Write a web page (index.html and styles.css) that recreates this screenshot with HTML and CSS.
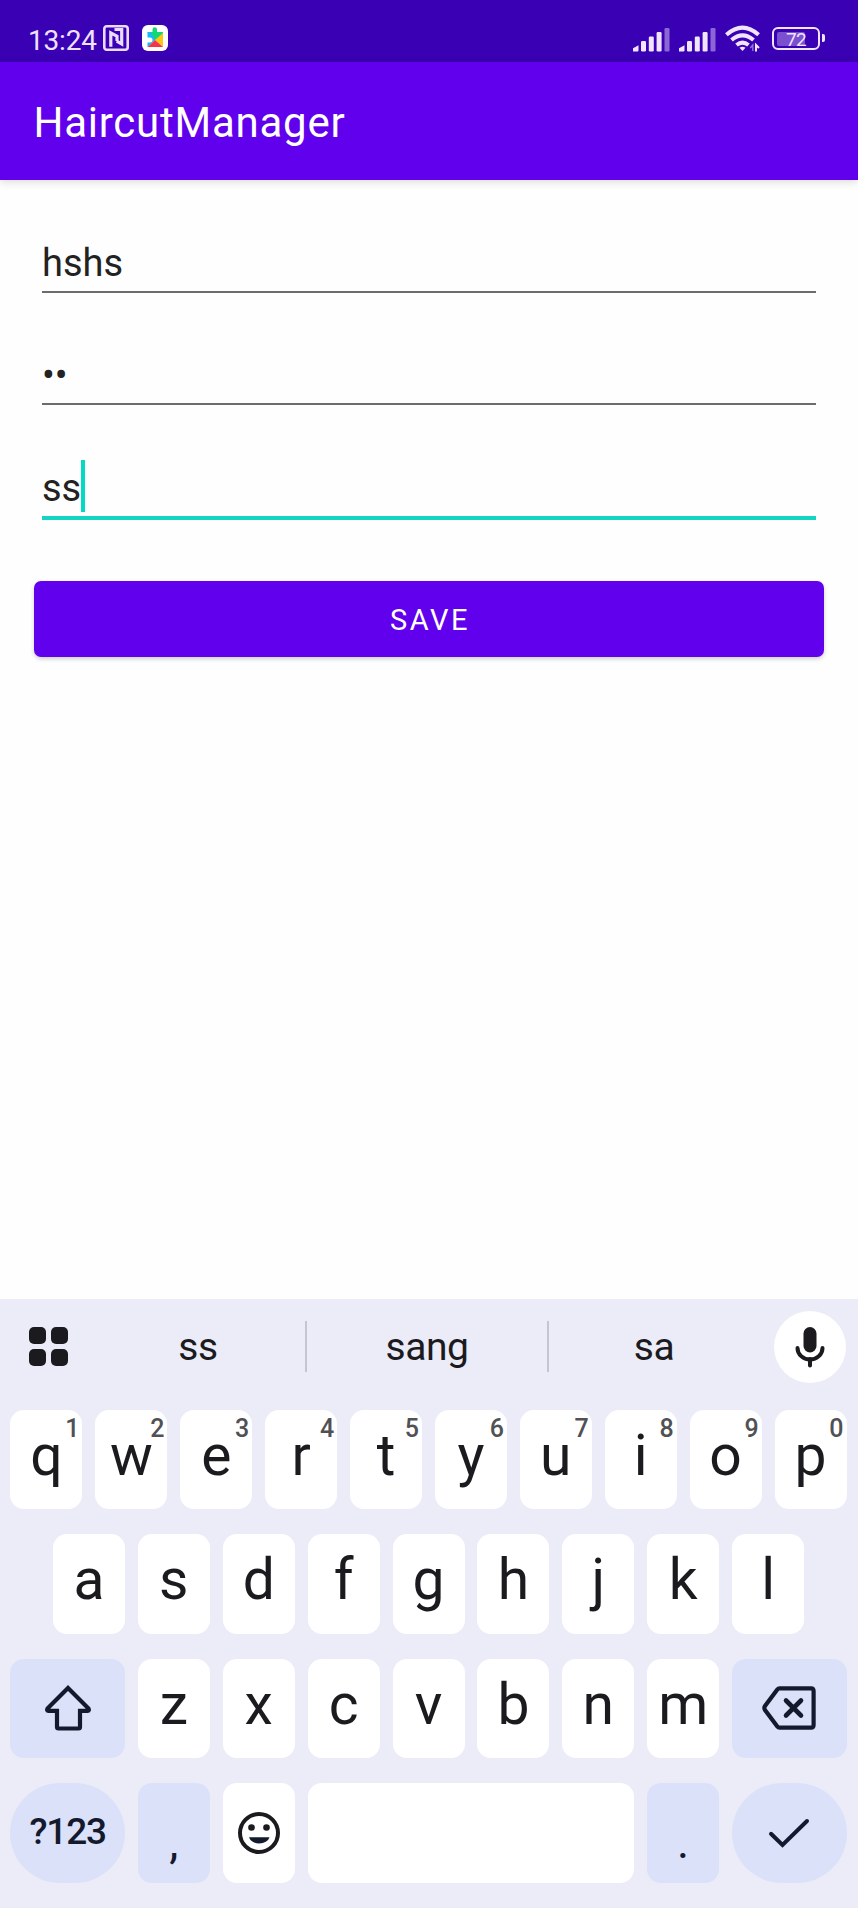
FILE: index.html
```html
<!DOCTYPE html>
<html lang="en">
<head>
<meta charset="utf-8">
<title>HaircutManager</title>
<link rel="stylesheet" href="styles.css">
</head>
<body>
<div class="screen">
  <header class="status">
    <span class="clock">13:24</span>
    <svg class="nfc" width="26" height="26" viewBox="0 0 26 26" fill="none" stroke="#eadcff"><rect x="1.300" y="1.300" width="23.400" height="23.400" rx="2.500" stroke-width="2.600"/><path d="M7.800 21.800V8l6.200 3.200V16M11.500 4.500h7.200V19l-5-2.800" stroke-width="3.200"/></svg>
    <svg class="play" width="26" height="26" viewBox="0 0 26 26"><rect width="26" height="26" rx="6" fill="#fff"/><path d="M5.500 7h5V4.500a2 2 0 0 1 4.500 0V7h6v3l-8 5.500z" fill="#13d775"/><path d="M5.500 7H9l4 8-7.500 7v-4.500h2.500a2.200 2.200 0 0 0 0-5H5.500z" fill="#16b8f5"/><path d="M21 8v14l-8-7z" fill="#ffc512"/><path d="M5.500 22l7.500-7 8 7z" fill="#f5334b"/></svg>
    <span class="spacer"></span>
    <svg class="signal" width="37" height="25" viewBox="0 0 37 25" fill="#f0e4ff"><path d="M0 24.500v-3.200l5.500-3v5.200q0 1-1 1z"/><rect x="8" y="14" width="5" height="10.500" rx="1.200"/><rect x="15.800" y="9.500" width="5" height="15" rx="1.200"/><rect x="23.600" y="5" width="5" height="19.500" rx="1.200"/><rect x="31.500" y="1" width="5" height="23.500" rx="1.200" opacity=".45"/></svg>
    <svg class="signal" width="37" height="25" viewBox="0 0 37 25" fill="#f0e4ff"><path d="M0 24.500v-3.200l5.500-3v5.200q0 1-1 1z"/><rect x="8" y="14" width="5" height="10.500" rx="1.200"/><rect x="15.800" y="9.500" width="5" height="15" rx="1.200"/><rect x="23.600" y="5" width="5" height="19.500" rx="1.200"/><rect x="31.500" y="1" width="5" height="23.500" rx="1.200" opacity=".45"/></svg>
    <svg class="wifi" width="35" height="27" viewBox="0 0 35 27" fill="none" stroke="#f0e4ff" stroke-width="4"><path d="M1.400 9.700Q17.500-4.600 33.600 9.700M6.500 15.100q11-9.400 22 0M11.500 20q6-4.800 12 0"/><path d="M14.500 22.800q3-2.200 6 0l-3 3.200z" fill="#f0e4ff" stroke="none"/><path d="M27.800 26v-6l-2.500 3" stroke-width="1.400" opacity=".5"/><path d="M31 26.500V20l3 3" stroke-width="2"/></svg>
    <div class="battery"><span class="battery-fill"></span><span class="battery-num">72</span></div><span class="battery-nub"></span>
  </header>
  <div class="appbar">HaircutManager</div>
  <main class="form">
    <div class="field"><span>hshs</span></div>
    <div class="field secret"><span>••</span></div>
    <div class="field active"><span>ss</span><i class="caret"></i></div>
    <div class="save">SAVE</div>
  </main>
  <section class="keyboard">
    <div class="suggest">
      <div class="menu"><i></i><i></i><i></i><i></i></div>
      <span class="word">ss</span><span class="word ruled">sang</span><span class="word">sa</span>
      <div class="mic"><svg width="30" height="42" viewBox="0 0 30 42"><rect x="8.500" y="1" width="13" height="25.500" rx="6.500" fill="#1b1b1f"/><path d="M2.500 22a12.500 11.500 0 0 0 25 0" fill="none" stroke="#1b1b1f" stroke-width="4" stroke-linecap="round"/><path d="M15 33v6.500" stroke="#1b1b1f" stroke-width="4" stroke-linecap="round"/></svg></div>
    </div>
    <div class="row">
      <div class="key">q<sup>1</sup></div><div class="key">w<sup>2</sup></div><div class="key">e<sup>3</sup></div><div class="key">r<sup>4</sup></div><div class="key">t<sup>5</sup></div><div class="key">y<sup>6</sup></div><div class="key">u<sup>7</sup></div><div class="key">i<sup>8</sup></div><div class="key">o<sup>9</sup></div><div class="key">p<sup>0</sup></div>
    </div>
    <div class="row">
      <div class="key">a</div><div class="key">s</div><div class="key">d</div><div class="key">f</div><div class="key">g</div><div class="key">h</div><div class="key">j</div><div class="key">k</div><div class="key">l</div>
    </div>
    <div class="row">
      <div class="key tint wide icon"><svg width="48" height="46" viewBox="0 0 48 46" fill="none" stroke="#141a2e" stroke-width="4.200"><path d="M24 3L3.500 23.500q-1.200 2.300 1 2.300h8.500V42q0 1.500 1.500 1.500h20q1.500 0 1.500-1.500V25.800h7.500q2.200 0 1-2.300z"/></svg></div>
      <div class="key">z</div><div class="key">x</div><div class="key">c</div><div class="key">v</div><div class="key">b</div><div class="key">n</div><div class="key">m</div>
      <div class="key tint wide icon"><svg width="54" height="44" viewBox="0 0 54 44" fill="none" stroke="#141a2e" stroke-width="4.200"><path d="M17.500 2.300H49q2.600 0 2.600 2.600v34.200q0 2.600-2.600 2.600H17.500q-1.200 0-2-1L3 24q-1.300-2 0-4L15.500 3.300q.8-1 2-1z"/><path d="M24 14.500l15 15m0-15l-15 15" stroke-width="4.600" stroke-linecap="round"/></svg></div>
    </div>
    <div class="row">
      <div class="key tint wide pill sym">?123</div>
      <div class="key tint punct">,</div>
      <div class="key icon"><svg width="42" height="42" viewBox="0 0 42 42"><circle cx="21" cy="21" r="19" fill="none" stroke="#1b1b1f" stroke-width="4"/><circle cx="13.500" cy="15.500" r="3.300" fill="#1b1b1f"/><circle cx="28.500" cy="15.500" r="3.300" fill="#1b1b1f"/><path d="M11 25.300h20.500a10.500 8 0 0 1-20.500 0z" fill="#141a2e"/></svg></div>
      <div class="key space"></div>
      <div class="key tint punct">.</div>
      <div class="key tint wide pill icon"><svg width="42" height="30" viewBox="0 0 42 30" fill="none" stroke="#141a2e" stroke-width="4" stroke-linecap="round"><path d="M3 15.800L14.500 27 39 3"/></svg></div>
    </div>
  </section>
</div>
</body>
</html>
```
FILE: styles.css
```css
* { box-sizing: border-box; }
body { margin: 0; background: #fff; font-family: Roboto, "Liberation Sans", sans-serif; }
.screen { width: 858px; height: 1908px; display: flex; flex-direction: column; overflow: hidden; background: #fefefe; }

.status { height: 62px; flex: none; background: #3a00b3; color: #eee2ff; display: flex; align-items: flex-start; padding: 25px 33px 0 28px; }
.clock { width: 75px; font-size: 28px; line-height: 31px; letter-spacing: -0.2px; }
.nfc { margin-right: 13px; }
.spacer { flex: 1; }
.signal { margin: 2px 9px 0 0; }
.wifi { margin-right: 12px; }
.battery { width: 48px; height: 23px; margin-top: 2px; border: 2.500px solid #f0e4ff; border-radius: 6px; display: flex; align-items: center; padding-left: 3px; }
.battery-fill { width: 28px; height: 14px; background: #7a50cf; border-radius: 2px; margin-right: -19px; }
.battery-num { position: relative; font-size: 19px; line-height: 18px; color: #f0e4ff; top: 1px; letter-spacing: -0.8px; }
.battery-nub { width: 3px; height: 8px; margin: 9px 0 0 2px; border-radius: 0 2px 2px 0; background: #f0e4ff; }

.appbar { height: 118px; flex: none; background: #6100ed; color: #fff; padding-left: 33.500px; font-size: 42px; line-height: 122px; letter-spacing: 0.75px; box-shadow: 0 2px 8px rgba(0, 20, 0, .15); }

.form { flex: 1; padding: 0 34px; }
.field { height: 112.500px; margin: 0 8px; border-bottom: 2px solid #6c6c6c; padding-bottom: 5.500px; display: flex; align-items: flex-end; font-size: 38px; line-height: 44px; color: #222; }
.field.secret { padding-bottom: 6.500px; }
.field.active { height: 115px; padding-bottom: 6px; border-bottom: 4px solid #14d5c4; }
.caret { width: 4px; height: 52px; margin-bottom: -2px; background: #03dac5; }
.save { height: 76px; margin-top: 61px; padding-left: 2px; border-radius: 7px; background: #6100ed; color: #fff; text-align: center; font-size: 29px; line-height: 78px; letter-spacing: 2.500px; box-shadow: 0 2px 4px rgba(0, 20, 0, .2); }

.keyboard { height: 609px; flex: none; background: #ececf8; color: #1b1b1f; }
.suggest { height: 110.500px; display: grid; grid-template-columns: 91px 214px 244px 210px 99px; align-items: start; }
.menu { display: grid; grid-template-columns: 17px 17px; grid-auto-rows: 17px; gap: 5px; margin: 28px 0 0 29px; }
.menu i { background: #1b1b1f; border-radius: 5px; }
.word { height: 51px; margin-top: 22px; text-align: center; font-size: 39px; line-height: 53px; letter-spacing: -0.5px; }
.ruled { border: solid #c5c5d0; border-width: 0 2px; }
.mic { width: 72px; height: 72px; margin: 12px 0 0 14.500px; border-radius: 50%; background: #fff; display: flex; align-items: center; justify-content: center; }
.row { display: flex; justify-content: center; gap: 12.900px; height: 99.500px; margin: 0 1px 25px 0; }
.key { position: relative; width: 72px; border-radius: 14px; background: #fff; display: flex; align-items: center; justify-content: center; padding-bottom: 7px; font-size: 57px; line-height: 60px; }
.key sup { position: absolute; top: 6px; right: 3px; font-size: 25px; line-height: 26px; font-weight: 500; color: #505055; }
.tint { background: #dce1fa; color: #141a2e; }
.wide { width: 114.500px; }
.icon { padding: 0; }
.pill { border-radius: 50px; }
.sym { padding: 0 0 2px; font-size: 37px; font-weight: 500; letter-spacing: -1.200px; }
.punct { padding: 18px 0 0; font-size: 46px; }
.space { width: 326.700px; }
```
